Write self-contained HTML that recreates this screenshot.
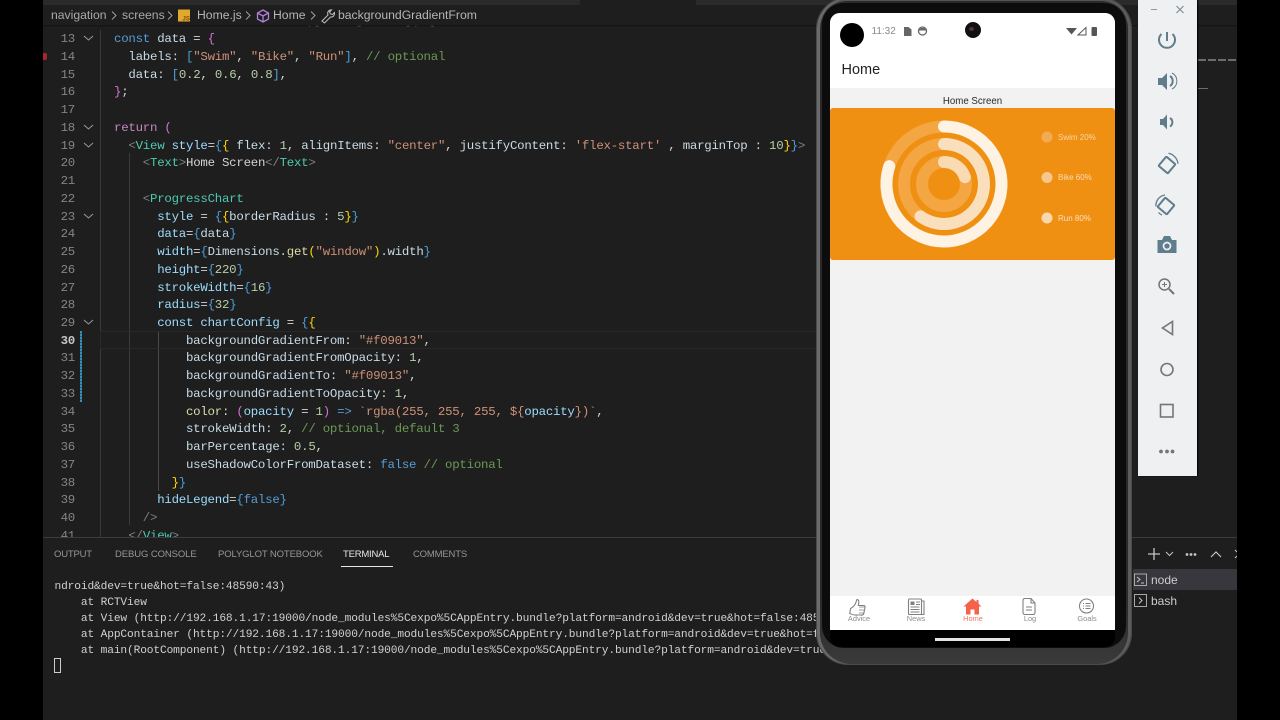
<!DOCTYPE html>
<html><head><meta charset="utf-8">
<style>
html,body{margin:0;padding:0;width:1280px;height:720px;overflow:hidden;background:#000}
*{box-sizing:border-box}
#w{position:absolute;left:0;top:0;width:1280px;height:720px;overflow:hidden;filter:blur(.3px)}
.a{position:absolute}
#vs{left:43px;top:0;width:1194px;height:720px;background:#1e1e1e;overflow:hidden}
.l{position:absolute;left:71px;height:18px;margin-top:1px;font:12.4px/18px "Liberation Mono",monospace;letter-spacing:-.24px;white-space:pre;color:#d4d4d4}
.n{position:absolute;left:0;width:32px;margin-top:1px;text-align:right;font:12.4px/18px "Liberation Mono",monospace;letter-spacing:-.24px;color:#858585}
.t{position:absolute;left:11.5px;margin-top:1px;font:11.2px/16px "Liberation Mono",monospace;letter-spacing:-.12px;color:#d0d0d0;white-space:pre}
.k{color:#569cd6}.v{color:#c8dbe6}.p{color:#d4d4d4}.m{color:#da70d6}.b{color:#4a9fdc}.y{color:#ffd700}.s{color:#ce9178}.c{color:#6a9955}.d{color:#b5cea8}.g{color:#808080}.h{color:#4ec9b0}.r{color:#c586c0}.f{color:#dcdcaa}.u{color:#9cdcfe}
.crumb{position:absolute;top:7px;font:12.2px/16px "Liberation Sans",sans-serif;color:#a9a9a9;white-space:pre}
.tab{position:absolute;top:548px;font:9.5px/14px "Liberation Sans",sans-serif;color:#969696;white-space:pre}
.lbl{position:absolute;top:614px;width:50px;text-align:center;font:7.4px/9px "Liberation Sans",sans-serif;color:#8c8c8c}
svg{position:absolute;overflow:visible}
</style></head><body>
<div id="w">
<div class="a" id="vs">
  <div class="a" style="left:0;top:0;width:1194px;height:5px;background:#2a2a2a"></div>
  <div class="a" style="left:537px;top:0;width:116px;height:5px;background:#1e1e1e"></div>
  <div class="l" style="top:11px;left:262px"><span style="color:#888">({ navigation }) {</span></div>
  <div class="a" style="left:0;top:5px;width:1194px;height:20px;background:#1e1e1e;box-shadow:0 1px 1px #141414"></div>
  <div class="crumb" style="left:8px">navigation</div>
  <div class="crumb" style="left:79px">screens</div>
  <div class="crumb" style="left:154px;color:#b5b5b5">Home.js</div>
  <div class="crumb" style="left:230px;color:#b5b5b5">Home</div>
  <div class="crumb" style="left:295px;color:#b5b5b5">backgroundGradientFrom</div>
  <svg style="left:0;top:0" width="500" height="30" fill="none" stroke="#a0a0a0" stroke-width="1">
    <path d="M69 11.5l4 4-4 4M125 11.5l4 4-4 4M203 11.5l4 4-4 4M268 11.5l4 4-4 4"/>
    <rect x="135" y="9.5" width="12" height="12" fill="#e0a92a" stroke="none"/>
    <text x="139.500" y="20.500" font-family="Liberation Sans, sans-serif" font-size="6" font-weight="bold" fill="#7a4c10" stroke="none">JS</text>
    <path d="M220 10l5.500 3v6l-5.500 3-5.500-3v-6zM214.500 13l5.500 3 5.500-3M220 16v6" stroke="#b180d7" stroke-width="1.300"/>
    <path d="M279 21l6-6c-1-2 0-4 2-5l1.500 0-2 2 1 2 2 .5 2-2c.5 2-1 5-4 4.500l-6 6z" stroke="#c0c0c0"/>
  </svg>

  <div class="a" style="left:57px;top:30px;width:1px;height:507px;background:#3a3a3a"></div>
  <div class="a" style="left:85.500px;top:153px;width:1px;height:372px;background:#3a3a3a"></div>
  <div class="a" style="left:114.500px;top:331px;width:1px;height:160px;background:#4a4a4a"></div>
  <div class="a" style="left:57px;top:331px;width:780px;height:18px;border:1px solid #292929;border-right:0"></div>
  <div class="a" style="left:-1px;top:52.500px;width:5px;height:7px;background:#a8272c;border-radius:2px"></div>
  <div class="a" style="left:37px;top:331px;width:2px;height:71px;background:repeating-linear-gradient(#3a8fb5 0 2px,#1f6483 2px 3px)"></div>

  <div class="n" style="top:29px">13</div>
  <div class="n" style="top:47px">14</div>
  <div class="n" style="top:65px">15</div>
  <div class="n" style="top:82px">16</div>
  <div class="n" style="top:100px">17</div>
  <div class="n" style="top:118px">18</div>
  <div class="n" style="top:136px">19</div>
  <div class="n" style="top:153px">20</div>
  <div class="n" style="top:171px">21</div>
  <div class="n" style="top:189px">22</div>
  <div class="n" style="top:207px">23</div>
  <div class="n" style="top:224px">24</div>
  <div class="n" style="top:242px">25</div>
  <div class="n" style="top:260px">26</div>
  <div class="n" style="top:278px">27</div>
  <div class="n" style="top:295px">28</div>
  <div class="n" style="top:313px">29</div>
  <div class="n" style="top:331px;color:#c6c6c6;font-weight:bold">30</div>
  <div class="n" style="top:348px">31</div>
  <div class="n" style="top:366px">32</div>
  <div class="n" style="top:384px">33</div>
  <div class="n" style="top:402px">34</div>
  <div class="n" style="top:419px">35</div>
  <div class="n" style="top:437px">36</div>
  <div class="n" style="top:455px">37</div>
  <div class="n" style="top:473px">38</div>
  <div class="n" style="top:490px">39</div>
  <div class="n" style="top:508px">40</div>
  <div class="n" style="top:526px">41</div>

  <svg style="left:0;top:0" width="60" height="340" fill="none" stroke="#9a9a9a" stroke-width="1">
    <path d="M41 36l4.500 4 4.500-4M41 125l4.500 4 4.500-4M41 143l4.500 4 4.500-4M41 214l4.500 4 4.500-4M41 320l4.500 4 4.500-4"/>
  </svg>

  <div class="l" style="top:29px"><span class="k">const</span> <span class="v">data</span> = <span class="m">{</span></div>
  <div class="l" style="top:47px">  <span class="v">labels</span>: <span class="b">[</span><span class="s">"Swim"</span>, <span class="s">"Bike"</span>, <span class="s">"Run"</span><span class="b">]</span>, <span class="c">// optional</span></div>
  <div class="l" style="top:65px">  <span class="v">data</span>: <span class="b">[</span><span class="d">0.2</span>, <span class="d">0.6</span>, <span class="d">0.8</span><span class="b">]</span>,</div>
  <div class="l" style="top:82px"><span class="m">}</span>;</div>
  <div class="l" style="top:118px"><span class="r">return</span> <span class="m">(</span></div>
  <div class="l" style="top:136px">  <span class="g">&lt;</span><span class="h">View</span> <span class="u">style</span>=<span class="b">{</span><span class="y">{</span> <span class="v">flex</span>: <span class="d">1</span>, <span class="v">alignItems</span>: <span class="s">"center"</span>, <span class="v">justifyContent</span>: <span class="s">'flex-start'</span> , <span class="v">marginTop</span> : <span class="d">10</span><span class="y">}</span><span class="b">}</span><span class="g">&gt;</span></div>
  <div class="l" style="top:153px">    <span class="g">&lt;</span><span class="h">Text</span><span class="g">&gt;</span>Home Screen<span class="g">&lt;/</span><span class="h">Text</span><span class="g">&gt;</span></div>
  <div class="l" style="top:189px">    <span class="g">&lt;</span><span class="h">ProgressChart</span></div>
  <div class="l" style="top:207px">      <span class="u">style</span> = <span class="b">{</span><span class="y">{</span><span class="v">borderRadius</span> : <span class="d">5</span><span class="y">}</span><span class="b">}</span></div>
  <div class="l" style="top:224px">      <span class="u">data</span>=<span class="b">{</span><span class="v">data</span><span class="b">}</span></div>
  <div class="l" style="top:242px">      <span class="u">width</span>=<span class="b">{</span><span class="v">Dimensions</span>.<span class="f">get</span><span class="y">(</span><span class="s">"window"</span><span class="y">)</span>.<span class="v">width</span><span class="b">}</span></div>
  <div class="l" style="top:260px">      <span class="u">height</span>=<span class="b">{</span><span class="d">220</span><span class="b">}</span></div>
  <div class="l" style="top:278px">      <span class="u">strokeWidth</span>=<span class="b">{</span><span class="d">16</span><span class="b">}</span></div>
  <div class="l" style="top:295px">      <span class="u">radius</span>=<span class="b">{</span><span class="d">32</span><span class="b">}</span></div>
  <div class="l" style="top:313px">      <span class="u">const</span> <span class="u">chartConfig</span> = <span class="b">{</span><span class="y">{</span></div>
  <div class="l" style="top:331px">          <span class="v">backgroundGradientFrom</span>: <span class="s">"#f09013"</span>,</div>
  <div class="l" style="top:348px">          <span class="v">backgroundGradientFromOpacity</span>: <span class="d">1</span>,</div>
  <div class="l" style="top:366px">          <span class="v">backgroundGradientTo</span>: <span class="s">"#f09013"</span>,</div>
  <div class="l" style="top:384px">          <span class="v">backgroundGradientToOpacity</span>: <span class="d">1</span>,</div>
  <div class="l" style="top:402px">          <span class="f">color</span>: <span class="m">(</span><span class="u">opacity</span> = <span class="d">1</span><span class="m">)</span> <span class="k">=&gt;</span> <span class="s">`rgba(255, 255, 255, ${</span><span class="u">opacity</span><span class="s">})`</span>,</div>
  <div class="l" style="top:419px">          <span class="v">strokeWidth</span>: <span class="d">2</span>, <span class="c">// optional, default 3</span></div>
  <div class="l" style="top:437px">          <span class="v">barPercentage</span>: <span class="d">0.5</span>,</div>
  <div class="l" style="top:455px">          <span class="v">useShadowColorFromDataset</span>: <span class="k">false</span> <span class="c">// optional</span></div>
  <div class="l" style="top:473px">        <span class="y">}</span><span class="b">}</span></div>
  <div class="l" style="top:490px">      <span class="u">hideLegend</span>=<span class="b">{</span><span class="k">false</span><span class="b">}</span></div>
  <div class="l" style="top:508px">    <span class="g">/&gt;</span></div>
  <div class="l" style="top:526px">  <span class="g">&lt;/</span><span class="h">View</span><span class="g">&gt;</span></div>

  <div class="a" style="left:0;top:537px;width:1194px;height:183px;background:#1e1e1e;border-top:1px solid #3c3c3c"></div>
  <div class="tab" style="left:11px;letter-spacing:-.2px">OUTPUT</div>
  <div class="tab" style="left:72px;letter-spacing:-.1px">DEBUG CONSOLE</div>
  <div class="tab" style="left:175px;letter-spacing:-.12px">POLYGLOT NOTEBOOK</div>
  <div class="tab" style="left:300px;letter-spacing:-.22px;color:#e7e7e7">TERMINAL</div>
  <div class="tab" style="left:370px;letter-spacing:-.18px">COMMENTS</div>
  <div class="a" style="left:298px;top:566px;width:52px;height:1px;background:#e7e7e7"></div>

  <div class="t" style="top:578px">ndroid&amp;dev=true&amp;hot=false:48590:43)</div>
  <div class="t" style="top:594px">    at RCTView</div>
  <div class="t" style="top:610px">    at View (http://192.168.1.17:19000/node_modules%5Cexpo%5CAppEntry.bundle?platform=android&amp;dev=true&amp;hot=false:4859</div>
  <div class="t" style="top:626px">    at AppContainer (http://192.168.1.17:19000/node_modules%5Cexpo%5CAppEntry.bundle?platform=android&amp;dev=true&amp;hot=fa</div>
  <div class="t" style="top:642px">    at main(RootComponent) (http://192.168.1.17:19000/node_modules%5Cexpo%5CAppEntry.bundle?platform=android&amp;dev=true</div>
  <div class="a" style="left:11px;top:658px;width:7px;height:15px;border:1px solid #ccc"></div>

  <div class="a" style="left:1090px;top:569px;width:104px;height:21px;background:#37373d"></div>
  <div class="a" style="left:1108px;top:572px;font:12px/16px 'Liberation Sans',sans-serif;color:#ccc">node</div>
  <div class="a" style="left:1108px;top:593px;font:12px/16px 'Liberation Sans',sans-serif;color:#ccc">bash</div>
  <svg style="left:0;top:0" width="1194" height="620" fill="none" stroke="#c5c5c5" stroke-width="1">
    <path d="M1105 554h12M1111 548v12" stroke-width="1.300"/>
    <path d="M1123 552l3.500 3.500 3.500-3.500"/>
    <path d="M1168 557l5-5 5 5" stroke-width="1.200"/>
    <circle cx="1144" cy="554.500" r=".9" fill="#c5c5c5"/><circle cx="1148" cy="554.500" r=".9" fill="#c5c5c5"/><circle cx="1152" cy="554.500" r=".9" fill="#c5c5c5"/>
    <rect x="1091.500" y="574" width="12" height="11.500" stroke="#a8a8a8"/>
    <path d="M1094 577l3 2.500-3 2.500M1098 583h3" stroke="#c5c5c5"/>
    <rect x="1091.500" y="594.500" width="12" height="12" stroke="#a8a8a8"/>
    <path d="M1096 597.500l3 3-3 3" stroke="#c5c5c5"/>
    <path d="M1192 550l2 2M1192 558l2-2" />
  </svg>
  <div class="a" style="left:1155px;top:59px;width:38px;height:2px;opacity:.55;background:repeating-linear-gradient(90deg,#aaa 0 8px,#1e1e1e 8px 10px)"></div>
  <div class="a" style="left:1155px;top:87.500px;width:10px;height:1.500px;opacity:.6;background:#8aa"></div>
</div>

<!-- phone -->
<div class="a" style="left:816px;top:-3px;width:316px;height:668px;border-radius:32px;background:linear-gradient(#2a2a2a 90%,#3a3a3a);border:1px solid #4a4a4a;box-shadow:inset 3px 0 0 #6a6a6a,inset -3px 0 0 #5c5c5c,inset 0 3px 0 #555"></div>
<div class="a" style="left:822px;top:3px;width:304px;height:645px;border-radius:22px;background:#0c0c0c"></div>
<div class="a" style="left:830px;top:13px;width:285px;height:634px;border-radius:10px;background:#000;overflow:hidden">
  <div class="a" style="left:0;top:0;width:285px;height:617px;background:#f2f2f2"></div>
  <div class="a" style="left:0;top:0;width:285px;height:75px;background:#fff"></div>
  <div class="a" style="left:10px;top:10px;width:24px;height:24px;border-radius:50%;background:#000"></div>
  <div class="a" style="left:41.500px;top:13px;font:10px/12px 'Liberation Sans',sans-serif;color:#8a8a8a">11:32</div>
  <div class="a" style="left:135px;top:9px;width:16px;height:16px;border-radius:50%;background:#111"></div>
  <div class="a" style="left:139px;top:14px;width:5px;height:4px;border-radius:50%;background:#50343a"></div>
  <svg style="left:0;top:0" width="285" height="40">
    <path d="M74 14h4.500l3 2.500v6.500h-7.500z" fill="#666"/>
    <circle cx="92.500" cy="18" r="4" fill="none" stroke="#666" stroke-width="1.300"/>
    <path d="M88.800 17.500a4 4 0 0 1 7.500 0z" fill="#666"/>
    <path d="M236 15h11l-5.500 6.500z" fill="#555"/>
    <path d="M256 14.500v7.500h-8z" fill="none" stroke="#555"/>
    <rect x="261.500" y="14" width="5.500" height="9" rx="1" fill="#555"/>
  </svg>
  <div class="a" style="left:11.500px;top:48px;font:14.500px/18px 'Liberation Sans',sans-serif;color:#222">Home</div>
  <div class="a" style="left:0;top:83px;width:285px;text-align:center;font:9.700px/12px 'Liberation Sans',sans-serif;color:#2a2a2a">Home Screen</div>
  <div class="a" style="left:0;top:95px;width:285px;height:152px;background:#f09013;border-radius:3px"></div>
  <svg style="left:0;top:95px" width="285" height="152" fill="none" stroke-width="12">
    <circle cx="114" cy="76" r="57.500" stroke="#fff" stroke-opacity=".2"/>
    <circle cx="114" cy="76" r="40" stroke="#fff" stroke-opacity=".2"/>
    <circle cx="114" cy="76" r="22" stroke="#fff" stroke-opacity=".2"/>
    <path d="M114 18.500A57.500 57.500 0 1 1 59.300 58.200" stroke="#fef2e2" stroke-linecap="round"/>
    <path d="M114 36A40 40 0 1 1 90.500 108.400" stroke="#fadfbd" stroke-linecap="round"/>
    <path d="M114 54A22 22 0 0 1 134.900 69.200" stroke="#f9dab3" stroke-linecap="round"/>
    <g stroke="none">
      <circle cx="217" cy="29" r="5.500" fill="#f4aa54"/>
      <circle cx="217" cy="69.500" r="5.500" fill="#f8c78e"/>
      <circle cx="217" cy="110" r="5.500" fill="#f9d8ae"/>
    </g>
  </svg>
  <div class="a" style="left:228px;top:119.500px;font:8px/10px 'Liberation Sans',sans-serif;color:#fbd5a4">Swim 20%</div>
  <div class="a" style="left:228px;top:160px;font:8px/10px 'Liberation Sans',sans-serif;color:#fbdcb6">Bike 60%</div>
  <div class="a" style="left:228px;top:200.500px;font:8px/10px 'Liberation Sans',sans-serif;color:#fbe0c0">Run 80%</div>

  <div class="a" style="left:0;top:583px;width:285px;height:34px;background:#fff"></div>
  <svg style="left:0;top:583px" width="285" height="22" fill="none" stroke="#808080" stroke-width="1.100">
    <path d="M20.500 12.500c2 -1 4-3 5-5l1.500-4c1.500 0 2 1.500 1.800 3l-.5 3h5.500c1.200 0 1.500 1 1.200 2l-1.200 6c-.2 1-1 1.500-2 1.500h-7c-2 0-3.500-.8-5-1.500z" />
    <path d="M29 11h6M29 14h6M29 17h5" stroke-width=".8"/>
    <rect x="78.500" y="3" width="13" height="15.500" rx="1"/>
    <path d="M91.500 5h2.500v13.500h-2.500"/>
    <rect x="80.500" y="5.500" width="4" height="3.500" fill="#808080" stroke="none"/>
    <path d="M86 6h4M86 8.500h4M80.500 11h9M80.500 13.500h9M80.500 16h9" stroke-width=".9"/>
    <path d="M195 2.500h6l4 4.500v9.500c0 1.200-.8 2-2 2h-8c-1.200 0-2-.8-2-2v-12c0-1.200.8-2 2-2z"/>
    <path d="M201 2.500v4.500h4M196 11h6M196 14h6" />
    <circle cx="256.500" cy="10" r="7" />
    <path d="M253 7.500h1M255.500 7.500h5M253 10h1M255.500 10h5M253 12.500h1M255.500 12.500h5"/>
    <path d="M142.500 2.500l-9 8h2.500v8h4.500v-5h4v5h4.500v-8h2.500l-3-2.700v-3.800h-2v2z" fill="#f4624a" stroke="none"/>
  </svg>
  <div class="a" style="left:105px;top:625px;width:75px;height:2.500px;background:#e4e4e4"></div>
</div>
<div class="lbl" style="left:834px">Advice</div>
<div class="lbl" style="left:891px">News</div>
<div class="lbl" style="left:948px;color:#f4765f">Home</div>
<div class="lbl" style="left:1005px">Log</div>
<div class="lbl" style="left:1062px">Goals</div>

<!-- emulator side panel -->
<div class="a" style="left:1138px;top:0;width:59px;height:476px;background:#eff0f1;box-shadow:1px 0 1px #000"></div>
<svg style="left:0;top:0" width="1280" height="480" fill="none">
  <path d="M1151 9.500h6" stroke="#999" stroke-width="1"/>
  <path d="M1176.500 6l7 7M1183.500 6l-7 7" stroke="#7f8e96" stroke-width="1.200"/>
  <g stroke="#607d8b" fill="none">
    <path d="M1161.500 34a8 8 0 1 0 11 0" stroke-width="2"/><path d="M1167 32v9" stroke-width="2"/>
    <path d="M1158 78h4l5-5v17l-5-5h-4z" fill="#607d8b" stroke="none"/>
    <path d="M1170 76a6 6 0 0 1 0 10" stroke-width="2"/>
    <path d="M1172 73a9 9 0 0 1 0 16" stroke-width="1"/>
    <path d="M1160 119h3l4-4.500v15l-4-4.500h-3z" fill="#607d8b" stroke="none"/>
    <path d="M1170 118a5 5 0 0 1 0 8.500" stroke-width="2"/>
    <rect x="1161" y="159" width="12" height="12" rx="1" transform="rotate(40 1167 165)" stroke-width="2"/>
    <path d="M1168.500 153.200a12 12 0 0 1 9.500 10.500" stroke-width="1.300"/>
    <rect x="1160" y="200" width="12" height="12" rx="1" transform="rotate(40 1166 206)" stroke-width="2"/>
    <path d="M1156 206.500a10.500 10.500 0 0 1 9-11.500M1158.500 212.500a10 10 0 0 0 3.500 2.500" stroke-width="1.300"/>
  </g>
  <path d="M1157.500 240h4.500l2-4h6l2 4h4.500v13h-19z" fill="#607d8b"/>
  <circle cx="1167" cy="246" r="3.500" fill="none" stroke="#eff0f1" stroke-width="1.700"/>
  <g stroke="#757575" fill="none">
    <circle cx="1164.500" cy="284.500" r="5.500" stroke-width="1.500"/>
    <path d="M1169 289l5 5" stroke-width="2"/>
    <path d="M1162 284.500h5M1164.500 282v5" stroke-width="1"/>
    <path d="M1172.500 321.500v13l-10-6.500z" stroke-width="1.600"/>
    <circle cx="1167" cy="369.500" r="6" stroke-width="1.600"/>
    <rect x="1160.500" y="404.500" width="12.500" height="12.500" stroke-width="1.600"/>
  </g>
  <g fill="#757575"><circle cx="1161" cy="451.500" r="1.900"/><circle cx="1167" cy="451.500" r="1.900"/><circle cx="1172.500" cy="451.500" r="1.900"/></g>
</svg>
</div>
</body></html>
